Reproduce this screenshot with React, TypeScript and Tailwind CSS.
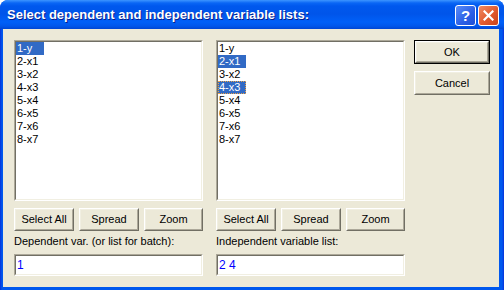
import React from "react";

const leftItems = ["1-y", "2-x1", "3-x2", "4-x3", "5-x4", "6-x5", "7-x6", "8-x7"];

interface ListProps {
  selected: number[];
  focused?: number;
}

function ListBox({ selected, focused }: ListProps) {
  return (
    <div className="h-[161px] border border-t-[#ACA899] border-l-[#ACA899] border-b-white border-r-white">
      <div className="h-full border border-t-[#716F64] border-l-[#716F64] border-b-[#F1EFE2] border-r-[#F1EFE2] bg-white">
        <ul>
          {leftItems.map((item, i) => {
            const isSel = selected.includes(i);
            const isFocus = focused === i;
            return (
              <li
                key={item}
                className={`w-[28px] h-[13px] leading-[13px] text-[11px] pl-[1px] whitespace-nowrap
                  ${isSel ? "bg-[#316AC5] text-white" : "text-black"}
                  ${isFocus ? "outline outline-1 outline-dotted outline-offset-[-1px] outline-[#E9A24A]" : ""}`}
              >
                {item}
              </li>
            );
          })}
        </ul>
      </div>
    </div>
  );
}

function Btn({ label, isDefault = false, className = "" }: { label: string; isDefault?: boolean; className?: string }) {
  const inner = (
    <div className="h-full border border-t-white border-l-white border-b-[#716F64] border-r-[#716F64]">
      <div className="h-full flex items-center justify-center border border-t-[#F1EFE2] border-l-[#F1EFE2] border-b-[#ACA899] border-r-[#ACA899] text-[11px] text-black bg-[#ECE9D8]">
        {label}
      </div>
    </div>
  );
  if (isDefault) {
    return <div className={`border border-black ${className}`}>{inner}</div>;
  }
  return <div className={className}>{inner}</div>;
}

function TextBox({ value }: { value: string }) {
  return (
    <div className="h-[22px] border border-t-[#ACA899] border-l-[#ACA899] border-b-white border-r-white">
      <div className="h-full border border-t-[#716F64] border-l-[#716F64] border-b-[#F1EFE2] border-r-[#F1EFE2] bg-white px-[1px] text-[12px] leading-[18px] text-[#0000FF]">
        {value}
      </div>
    </div>
  );
}

function Column({ selected, focused, label, value }: ListProps & { label: string; value: string }) {
  return (
    <div className="w-[189px] flex flex-col">
      <ListBox selected={selected} focused={focused} />
      <div className="mt-[7px] flex gap-[5px]">
        <Btn label="Select All" className="w-[60px] h-[23px]" />
        <Btn label="Spread" className="w-[60px] h-[23px]" />
        <Btn label="Zoom" className="w-[59px] h-[23px]" />
      </div>
      <div className="mt-[4px] h-[13px] leading-[13px] text-[11px] text-black whitespace-nowrap">{label}</div>
      <div className="mt-[6px]">
        <TextBox value={value} />
      </div>
    </div>
  );
}

export default function App() {
  return (
    <div className="w-[504px] h-[290px] bg-white font-['Liberation_Sans',Arial,sans-serif]">
      <div className="h-full flex flex-col rounded-t-[8px] overflow-hidden bg-[linear-gradient(90deg,#0831D9_0px,#0058EE_2px,#0058EE_calc(100%-2px),#0831D9_100%)]">
        {/* title bar */}
        <div className="h-[29px] shrink-0 flex items-center pl-[7px] pr-[5px] bg-[linear-gradient(180deg,#3D95FF_0px,#0A66F5_3px,#0058EE_6px,#0055EA_14px,#0060F8_22px,#0057EC_26px,#0046D3_29px)]">
          <div className="flex-1 text-white font-bold text-[13px] [text-shadow:1px_1px_0_#0A1E8A] whitespace-nowrap">
            Select dependent and independent variable lists:
          </div>
          <div className="flex gap-[2px] mt-[1px]">
            <div className="w-[21px] h-[21px] rounded-[3px] border border-white bg-[linear-gradient(135deg,#5A8CF8,#2A5FE6_60%,#1C4FD6)] flex items-center justify-center text-white font-bold text-[15px] leading-none">
              ?
            </div>
            <div className="w-[21px] h-[21px] rounded-[3px] border border-white bg-[linear-gradient(135deg,#F08A62,#E15A2E_55%,#C8421A)] flex items-center justify-center">
              <svg width="11" height="11" viewBox="0 0 11 11">
                <path d="M1.5 1.5 L9.5 9.5 M9.5 1.5 L1.5 9.5" stroke="white" strokeWidth="2.2" strokeLinecap="square" />
              </svg>
            </div>
          </div>
        </div>
        {/* client area */}
        <div className="flex-1 ml-[3px] mr-[5px] mb-[3px] bg-[#ECE9D8] pt-[11px] pl-[11px] flex">
          <Column selected={[0]} label="Dependent var. (or list for batch):" value="1" />
          <div className="w-[13px]" />
          <Column selected={[1, 3]} focused={3} label="Independent variable list:" value="2 4" />
          <div className="ml-[9px] flex flex-col gap-[7px]">
            <Btn label="OK" isDefault className="w-[76px] h-[24px]" />
            <Btn label="Cancel" className="w-[76px] h-[24px]" />
          </div>
        </div>
      </div>
    </div>
  );
}
